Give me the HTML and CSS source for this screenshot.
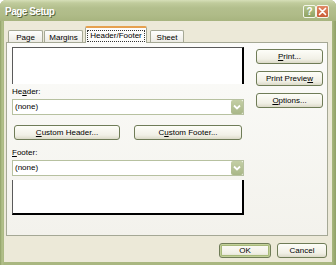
FILE: index.html
```html
<!DOCTYPE html>
<html>
<head>
<meta charset="utf-8">
<link rel="stylesheet" href="styles.css">
</head>
<body>
<div class="window">
  <div class="titlebar">
    <span class="title">Page Setup</span>
    <div class="caption-btns">
      <span class="cap-btn help">?</span>
      <span class="cap-btn close"><svg width="11" height="11" viewBox="0 0 11 11"><path d="M2.5 2.5 L8.5 8.5 M8.5 2.5 L2.5 8.5" stroke="#fff" stroke-width="1.7" stroke-linecap="round"/></svg></span>
    </div>
  </div>
  <div class="body">
    <div class="tabs">
      <div class="tab tab-page">Page</div>
      <div class="tab tab-margins">Margins</div>
      <div class="tab tab-hf active"><span class="focus">Header/Footer</span></div>
      <div class="tab tab-sheet">Sheet</div>
    </div>
    <div class="panel">
      <div class="left">
        <div class="preview preview-top"></div>
        <div class="lbl">He<u>a</u>der:</div>
        <div class="combo"><span class="combo-text">(none)</span><span class="arrow"><svg width="12" height="12" viewBox="0 0 12 12"><path d="M3 4.5 L6 7.5 L9 4.5" fill="none" stroke="#fff" stroke-width="1.8"/></svg></span></div>
        <div class="custom-row">
          <button class="btn btn-ch"><u>C</u>ustom Header...</button>
          <button class="btn btn-cf">C<u>u</u>stom Footer...</button>
        </div>
        <div class="lbl lbl-footer"><u>F</u>ooter:</div>
        <div class="combo"><span class="combo-text">(none)</span><span class="arrow"><svg width="12" height="12" viewBox="0 0 12 12"><path d="M3 4.5 L6 7.5 L9 4.5" fill="none" stroke="#fff" stroke-width="1.8"/></svg></span></div>
        <div class="preview preview-bottom"></div>
      </div>
      <div class="right">
        <button class="btn side"><u>P</u>rint...</button>
        <button class="btn side">Print Previe<u>w</u></button>
        <button class="btn side"><u>O</u>ptions...</button>
      </div>
    </div>
    <div class="actions">
      <button class="btn btn-ok">OK</button>
      <button class="btn btn-cancel">Cancel</button>
    </div>
  </div>
</div>
</body>
</html>
```
FILE: styles.css
```css
* { box-sizing: border-box; }
html, body { margin: 0; padding: 0; background: #ffffff; }
body { font-family: "Liberation Sans", Arial, sans-serif; font-size: 8px; color: #000; }

.window {
  width: 336px;
  height: 265px;
  display: flex;
  flex-direction: column;
  background: linear-gradient(to right, #8fa066 0, #b3c18b 2px, #a9b780 4px, #a9b780 calc(100% - 4px), #8fa066 100%);
  border-radius: 6px 6px 0 0;
  overflow: hidden;
}

.titlebar {
  height: 21px;
  flex: none;
  display: flex;
  align-items: center;
  justify-content: space-between;
  padding-left: 5px;
  padding-right: 7px;
  background: linear-gradient(to bottom, #d6dfb8 0, #c0cb9c 3px, #b3bf8d 8px, #afbb88 15px, #a7b47f 21px);
}
.title {
  font-size: 10px;
  font-weight: bold;
  color: #fff;
  letter-spacing: -0.5px;
  text-shadow: 1px 1px 0 #5b6841;
  margin-top: 1px;
}
.caption-btns { display: flex; gap: 0; margin-top: 2px; }
.cap-btn {
  width: 13px;
  height: 13px;
  border: 1px solid #f4f6ea;
  border-radius: 2px;
  display: flex;
  align-items: center;
  justify-content: center;
  color: #fff;
  font-weight: bold;
  font-size: 10px;
}
.help { background: linear-gradient(#b4c48c, #8fa263); }
.close { background: linear-gradient(#e08a66, #c95a35); }

.body {
  flex: 1;
  margin: 0 4px 3px 4px;
  background: #ece9d8;
  display: flex;
  flex-direction: column;
  padding: 5px 4px 4px 2px;
}

.tabs {
  height: 16px;
  display: flex;
  align-items: flex-end;
  padding-left: 2px;
}
.tab {
  height: 12px;
  border: 1px solid #a5a895;
  border-bottom: none;
  border-radius: 2px 2px 0 0;
  background: linear-gradient(#fefefd, #ecebe4);
  display: flex;
  align-items: center;
  justify-content: center;
  padding-top: 1px;
}
.tab-page { width: 35px; margin-right: 1px; }
.tab-margins { width: 39px; margin-right: 2px; }
.tab-hf { width: 62px; margin-right: 3px; }
.tab-sheet { width: 34px; }
.tab.active {
  height: 17px;
  margin-bottom: -1px;
  background: #fcfcfb;
  border-top: 2px solid #e6a04e;
  position: relative;
  z-index: 1;
  padding-top: 0;
}
.focus {
  border: 1px dotted #333;
  padding: 0 2px;
  line-height: 10px;
}

.panel {
  height: 194px;
  border: 1px solid #a5a895;
  background: linear-gradient(#fbfbf9, #f3f2ec);
  display: flex;
  gap: 12px;
  padding: 4px 4px 0 5px;
}
.left { width: 232px; display: flex; flex-direction: column; }
.right { width: 67px; display: flex; flex-direction: column; gap: 7px; padding-top: 2px; }

.preview { background: #fff; }
.preview-top {
  height: 37px;
  border-top: 1px solid #5a5a5a;
  border-left: 1px solid #5a5a5a;
  border-right: 2px solid #000;
}
.preview-bottom {
  height: 35px;
  margin-top: 4px;
  border-left: 1px solid #5a5a5a;
  border-right: 2px solid #000;
  border-bottom: 2px solid #000;
}

.lbl { line-height: 11px; margin-top: 2px; }
.lbl-footer { margin-top: 7px; }

.combo {
  height: 16px;
  margin-top: 2px;
  border: 1px solid #b7c1a0;
  background: #fff;
  display: flex;
  align-items: center;
  justify-content: space-between;
  padding-left: 2px;
}
.combo-text { line-height: 12px; }
.arrow {
  width: 12px;
  height: 14px;
  border-radius: 2px;
  background: linear-gradient(#c4cfa6, #a9b788);
  display: flex;
  align-items: center;
  justify-content: center;
}

.custom-row {
  display: flex;
  justify-content: space-between;
  padding: 0 2px;
  margin-top: 10px;
}

.btn {
  font-family: "Liberation Sans", Arial, sans-serif;
  font-size: 8px;
  color: #000;
  height: 15px;
  padding: 0;
  border: 1px solid #6f7c57;
  border-radius: 3px;
  background: linear-gradient(#fdfdf8, #f1f0e6 70%, #dcdac9);
  display: flex;
  align-items: center;
  justify-content: center;
  line-height: 10px;
}
.btn-ch { width: 106px; }
.btn-cf { width: 108px; }
.side { width: 67px; }

.actions {
  display: flex;
  justify-content: flex-end;
  gap: 6px;
  margin-top: 7px;
  padding-right: 1px;
}
.btn-ok {
  width: 52px;
  box-shadow: inset 0 0 0 1px #c3d09a, inset 0 0 0 2px #a7b97a;
}
.btn-cancel { width: 50px; }
```
